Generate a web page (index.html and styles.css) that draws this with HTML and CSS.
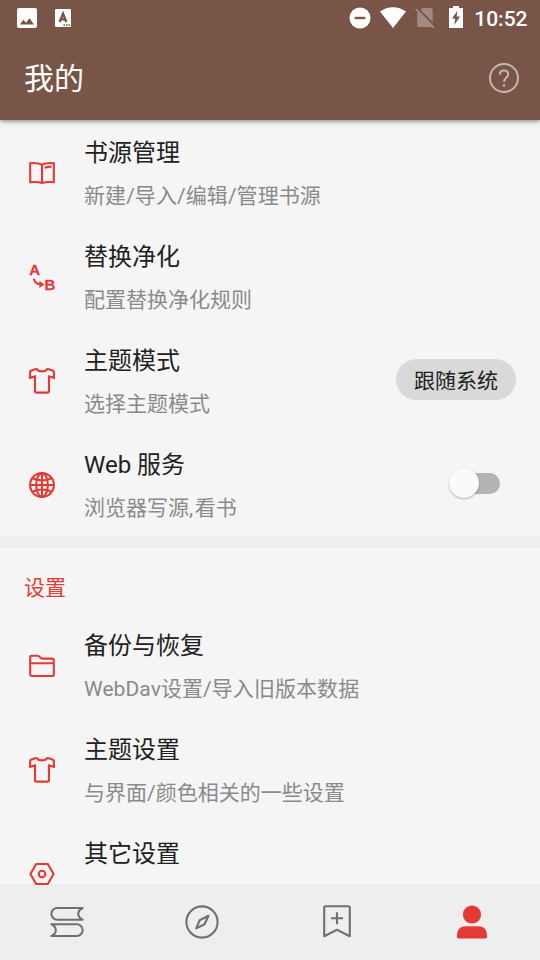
FILE: index.html
```
<!DOCTYPE html>
<html lang="zh-CN">
<head>
<meta charset="utf-8">
<title>我的</title>
<link rel="stylesheet" href="styles.css">
</head>
<body>
<svg class="defs" width="0" height="0" aria-hidden="true">
  <symbol id="shirt" viewBox="0 0 28 28">
    <path d="M2.1 5.2Q2.1 4.2 3 3.8L8 2.1Q8.8 1.9 9.4 2.6C10.8 4.9 17.2 4.9 18.6 2.6Q19.2 1.9 20 2.1L25 3.8Q25.9 4.2 25.9 5.2V10.8L21 9.4V24Q21 25.6 19.4 25.6H8.6Q7 25.6 7 24V9.4L2.1 10.8Z"/>
  </symbol>
</svg>
<div class="screen">
  <header class="top">
    <div class="status">
      <div class="status-group">
        <svg width="20" height="20" viewBox="0 0 20 20"><path fill="#fff" fill-rule="evenodd" d="M2 0H18Q20 0 20 2V18Q20 20 18 20H2Q0 20 0 18V2Q0 0 2 0ZM3 16.5H17L12.5 10.2 9 14.7 6.3 11.8Z"/></svg>
        <svg class="lang" width="16" height="18" viewBox="0 0 16 18"><rect width="16" height="18" rx="1" fill="#fff"/><path fill="none" stroke="#795548" stroke-width="2.3" d="M4.6 13 8 4.5 11.4 13M5.7 10.3H10.3"/><path stroke="#795548" stroke-width="1.4" stroke-dasharray="1.5 1" d="M8.5 16H15"/></svg>
      </div>
      <div class="status-group">
        <svg width="22" height="22" viewBox="0 0 22 22"><circle cx="11" cy="11" r="10.5" fill="#fff"/><path stroke="#795548" stroke-width="2.4" d="M5.7 11H16.3"/></svg>
        <svg class="wifi" width="26" height="22" viewBox="0 0 26 22"><path fill="#fff" d="M0 4.6Q6 .2 13 .2T26 4.6L13 21Z"/></svg>
        <svg class="sim" width="20" height="22" viewBox="0 0 20 22"><path fill="#a38a81" d="M7.5 1H16Q17.7 1 17.7 2.7V20H4Q2.2 20 2.2 18.4V6.3Z"/><path stroke="#795548" stroke-width="1.8" d="M2 .5 20 18.9"/><path stroke="#a38a81" stroke-width="1.8" d="M.7 2 19 21"/></svg>
        <svg class="battery" width="14" height="22" viewBox="0 0 14 22"><path fill="#fff" d="M4 0H10V2H14V22H0V2H4Z"/><path fill="#795548" d="M8.5 4.8 3 12.6H6.2L5.3 19 11 10.6H7.6Z"/></svg>
        <span class="time">10:52</span>
      </div>
    </div>
    <div class="appbar">
      <h1>我的</h1>
      <svg width="32" height="32" viewBox="0 0 32 32" fill="none" stroke="#c6b7b1" stroke-width="2"><circle cx="16" cy="16" r="14"/><path d="M11.8 12.7C11.8 10 13.5 8.5 16 8.5S20.2 10.1 20.2 12.4C20.2 15.6 16 15.4 16 20"/><path d="M16 22.3V24.6" stroke-width="2.4"/></svg>
    </div>
  </header>

  <main>
    <section class="group">
      <div class="row">
        <svg class="icon" viewBox="0 0 28 28"><path d="M2.2 4.2C7 3.7 11 4 14 5.7 17 4 21 3.7 25.8 4.2V23.2C21 22.8 17 23 14 24 11 23 7 22.8 2.2 23.2ZM14 5.7V24M16.7 8.7Q20 7.7 23.5 7.6"/></svg>
        <div class="text"><h2>书源管理</h2><p class="wide">新建/导入/编辑/管理书源</p></div>
      </div>
      <div class="row">
        <svg class="icon" viewBox="0 0 28 28"><text x="1.3" y="11.8">A</text><text x="16.6" y="26.7">B</text><path d="M5.8 15.7Q7.2 21.3 13 21.3"/><path class="solid" d="M11.4 17.8 16.4 21.5 11.4 25Z"/></svg>
        <div class="text"><h2>替换净化</h2><p>配置替换净化规则</p></div>
      </div>
      <div class="row">
        <svg class="icon"><use href="#shirt"/></svg>
        <div class="text"><h2>主题模式</h2><p>选择主题模式</p></div>
        <span class="chip">跟随系统</span>
      </div>
      <div class="row">
        <svg class="icon" viewBox="0 0 28 28"><circle cx="14" cy="14" r="11.9"/><ellipse cx="14" cy="14" rx="5.8" ry="11.9"/><path d="M14 2V26M2 14H26M4.5 7.3Q14 11.7 23.5 7.3M4.5 20.7Q14 16.3 23.5 20.7"/></svg>
        <div class="text"><h2>Web 服务</h2><p>浏览器写源<span class="comma">,</span>看书</p></div>
        <span class="switch"><span class="thumb"></span></span>
      </div>
    </section>
    <section class="group settings">
      <h3>设置</h3>
      <div class="row">
        <svg class="icon" viewBox="0 0 28 28"><path d="M2.2 22.4V5.3Q2.2 3.7 3.8 3.7H9.6C11.7 3.7 12.2 6.6 14.5 6.6H24.2Q25.8 6.6 25.8 8.2V22.4Q25.8 24 24.2 24H3.8Q2.2 24 2.2 22.4ZM2.2 11.2H25.8"/></svg>
        <div class="text"><h2>备份与恢复</h2><p class="wide">WebDav设置/导入旧版本数据</p></div>
      </div>
      <div class="row">
        <svg class="icon"><use href="#shirt"/></svg>
        <div class="text"><h2>主题设置</h2><p>与界面/颜色相关的一些设置</p></div>
      </div>
      <div class="row last">
        <svg class="icon" viewBox="0 0 28 28"><path d="M8.2 4H19.8L25.6 14 19.8 24H8.2L2.4 14Z"/><circle cx="14" cy="14" r="3.3"/></svg>
        <div class="text"><h2>其它设置</h2></div>
      </div>
    </section>
  </main>

  <nav>
    <a><svg viewBox="0 0 36 36"><path d="M33.6 4H8.2A5.85 5.85 0 0 0 8.2 15.7H33.6Q29.3 13.4 29.3 9.8T33.6 4ZM2.4 20.3H27.8A5.85 5.85 0 0 1 27.8 32H2.4Q6.8 29.8 6.8 26.2T2.4 20.3Z"/></svg></a>
    <a><svg viewBox="0 0 36 36"><circle cx="18" cy="18" r="15.6"/><path d="M24.5 11.8 15.6 16.3 12.2 24.4 20.5 20.2Z"/></svg></a>
    <a><svg viewBox="0 0 36 36"><path d="M5.2 32.2V3.8Q5.2 2.2 6.8 2.2H29.2Q30.8 2.2 30.8 3.8V32.2L18 25.8ZM18 8.3V20.3M12 14.3H24"/></svg></a>
    <a class="active"><svg viewBox="0 0 36 36"><circle cx="18" cy="10.5" r="9.1"/><path d="M3 33V31Q3 22.2 12 22.2H24Q33 22.2 33 31V33Q33 34.6 31.4 34.6H4.6Q3 34.6 3 33Z"/></svg></a>
  </nav>
</div>
</body>
</html>
```
FILE: styles.css
```
* {
  box-sizing: border-box;
}

body,
h1,
h2,
h3,
p {
  margin: 0;
  font-weight: 400;
}

body {
  background: #f5f5f5;
  font-family: Roboto, "Noto Sans CJK SC", sans-serif;
}

svg {
  display: block;
  flex: none;
}

.defs {
  position: absolute;
}

.screen {
  display: flex;
  flex-direction: column;
  height: 960px;
  overflow: hidden;
}

.top {
  flex: none;
  height: 120px;
  background: #795548;
  color: #fff;
  box-shadow: 0 1px 5px rgba(0, 0, 0, 0.5);
  z-index: 1;
}

.status {
  display: flex;
  justify-content: space-between;
  height: 36px;
  padding: 0 12.5px 0 17px;
}

.status-group {
  display: flex;
  align-items: center;
}

.lang {
  margin-left: 18px;
}

.wifi {
  margin-left: 9px;
}

.sim {
  margin-left: 9px;
}

.battery {
  margin: 0 11px 2px 14px;
}

.time {
  font-size: 21px;
  font-weight: 500;
  line-height: 36px;
  padding-top: 1px;
}

.appbar {
  display: flex;
  align-items: center;
  justify-content: space-between;
  height: 84px;
  padding: 0 20px 0 24px;
}

h1 {
  padding-top: 2px;
  font-size: 30px;
  line-height: 44px;
}

main {
  flex: none;
  height: 764px;
}

.group {
  background: #f5f5f5;
}

.settings {
  border-top: 12px solid #eee;
}

h3 {
  height: 65px;
  padding: 25px 24px 0;
  color: #e53935;
  font-size: 21px;
  line-height: 30px;
}

.row {
  display: flex;
  height: 104px;
  padding: 0 24px 0 28px;
}

.last {
  height: 63px;
}

.icon {
  width: 28px;
  height: 28px;
  margin: 39px 28px 0 0;
  fill: none;
  stroke: #e53935;
  stroke-width: 2.1;
  overflow: visible;
  position: relative;
  z-index: 2;
}

.icon text {
  font: bold 15px "Liberation Sans", sans-serif;
  fill: #e53935;
  stroke: #e53935;
  stroke-width: 0.3;
}

.icon .solid {
  fill: #e53935;
  stroke: none;
}

.text {
  flex: 1;
  padding-top: 15px;
}

h2 {
  color: #212121;
  font-size: 24px;
  line-height: 36px;
}

p {
  margin-top: 10px;
  color: #8a8a8a;
  font-size: 21px;
  line-height: 31px;
}

.wide {
  letter-spacing: 0.07px;
}

.comma {
  letter-spacing: 1.6px;
}

.chip {
  width: 120px;
  height: 41px;
  margin-top: 31px;
  border-radius: 21px;
  background: #d9d9d9;
  color: #212121;
  font-size: 21px;
  line-height: 44px;
  text-align: center;
}

.switch {
  width: 46px;
  height: 21px;
  margin: 41px 16px 0 0;
  border-radius: 11px;
  background: #b3b3b3;
}

.thumb {
  display: block;
  width: 30px;
  height: 30px;
  margin: -5px 0 0 -5px;
  border-radius: 50%;
  background: #fafafa;
  box-shadow: 0 1px 2px rgba(0, 0, 0, 0.3);
}

nav {
  display: grid;
  grid-template-columns: repeat(4, 1fr);
  flex: none;
  height: 76px;
  background: #eee;
}

nav a {
  display: flex;
  align-items: center;
  justify-content: center;
  padding-right: 1px;
}

nav svg {
  width: 36px;
  height: 36px;
  fill: none;
  stroke: #707070;
  stroke-width: 2.1;
  stroke-linejoin: round;
}

nav .active svg {
  fill: #e53935;
  stroke: none;
}
```
